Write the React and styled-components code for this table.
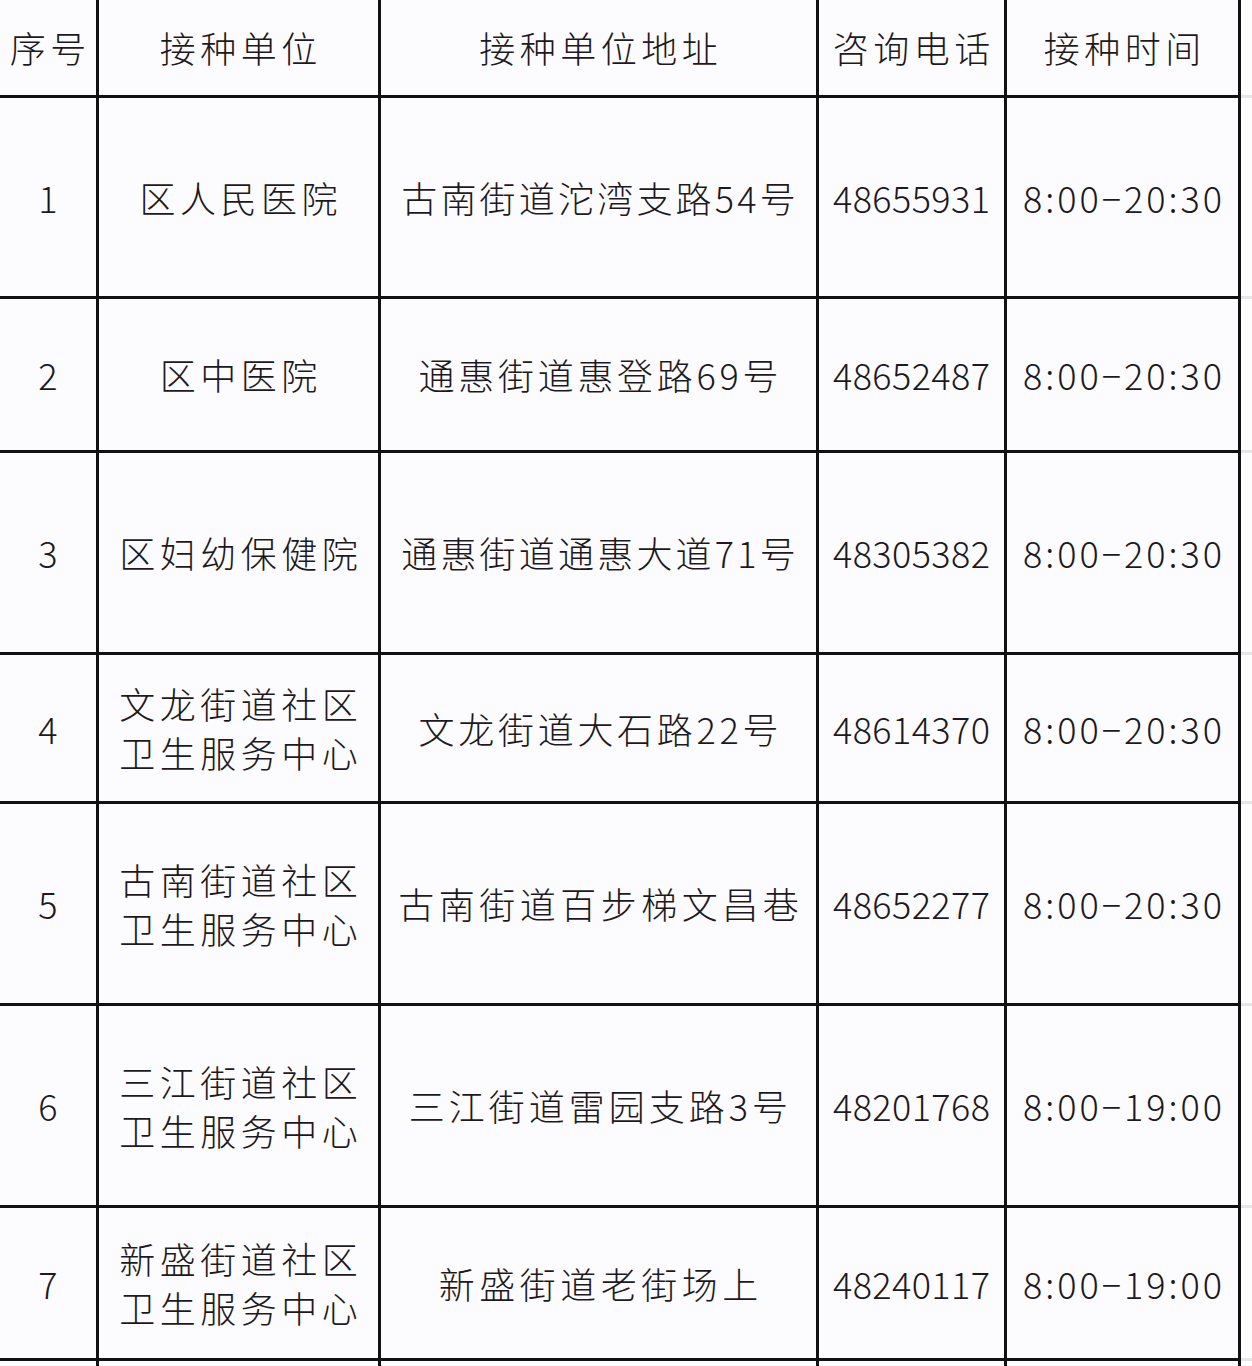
import React from 'react'
import styled, { createGlobalStyle } from 'styled-components'

const GlobalStyle = createGlobalStyle`
  html, body {
    margin: 0;
    padding: 0;
    background: #fcfbfd;
    overflow: hidden;
  }
`

const ROWS = '95px 198px 151px 199px 146px 199px 199px 150px 60px'

const Page = styled.div`
  display: flex;
  align-items: flex-start;
  width: 1252px;
  height: 1366px;
  overflow: hidden;
  font-family: "Noto Sans CJK SC", "Noto Sans", sans-serif;
  font-weight: 300;
  color: #1c1920;
`

const Sheet = styled.div`
  display: grid;
  grid-template-columns: 96px 279px 435px 185px 231px;
  grid-template-rows: ${ROWS};
  gap: 3px;
  padding-right: 3px;
  background: #121112;
  flex-shrink: 0;
`

const Cell = styled.div`
  background: #fcfbfd;
  display: flex;
  align-items: center;
  justify-content: center;
  text-align: center;
  font-size: 36px;
  line-height: 49px;
  letter-spacing: ${(p) => p.$spacing ?? 4.5}px;
  padding-left: ${(p) => p.$spacing ?? 4.5}px;
  white-space: nowrap;
`

const Filler = styled.div`
  flex: 1;
  display: grid;
  grid-template-rows: ${ROWS};
  row-gap: 3px;
  background: #e6e5e8;
`

const FillerCell = styled.div`
  background: #fdfdfe;
`

const headers = ['序号', '接种单位', '接种单位地址', '咨询电话', '接种时间']

const rows = [
  ['1', ['区人民医院'], '古南街道沱湾支路54号', '48655931', '8:00-20:30', 3.2],
  ['2', ['区中医院'], '通惠街道惠登路69号', '48652487', '8:00-20:30', 3.7],
  ['3', ['区妇幼保健院'], '通惠街道通惠大道71号', '48305382', '8:00-20:30', 3.2],
  ['4', ['文龙街道社区', '卫生服务中心'], '文龙街道大石路22号', '48614370', '8:00-20:30', 3.7],
  ['5', ['古南街道社区', '卫生服务中心'], '古南街道百步梯文昌巷', '48652277', '8:00-20:30', 4.5],
  ['6', ['三江街道社区', '卫生服务中心'], '三江街道雷园支路3号', '48201768', '8:00-19:00', 4],
  ['7', ['新盛街道社区', '卫生服务中心'], '新盛街道老街场上', '48240117', '8:00-19:00', 4.5],
]

export default function App() {
  return (
    <Page>
      <GlobalStyle />
      <Sheet>
        {headers.map((h) => (
          <Cell key={h}>{h}</Cell>
        ))}
        {rows.map(([no, unit, addr, phone, time, addrSpacing]) => (
          <React.Fragment key={no}>
            <Cell $spacing={0}>{no}</Cell>
            <Cell>
              <div>
                {unit.map((line) => (
                  <div key={line}>{line}</div>
                ))}
              </div>
            </Cell>
            <Cell $spacing={addrSpacing}>{addr}</Cell>
            <Cell $spacing={0.4}>{phone}</Cell>
            <Cell $spacing={3}>{time.replace('-', '−')}</Cell>
          </React.Fragment>
        ))}
        {headers.map((h) => (
          <Cell key={'empty-' + h} />
        ))}
      </Sheet>
      <Filler>
        {Array.from({ length: 9 }).map((_, i) => (
          <FillerCell key={i} />
        ))}
      </Filler>
    </Page>
  )
}
